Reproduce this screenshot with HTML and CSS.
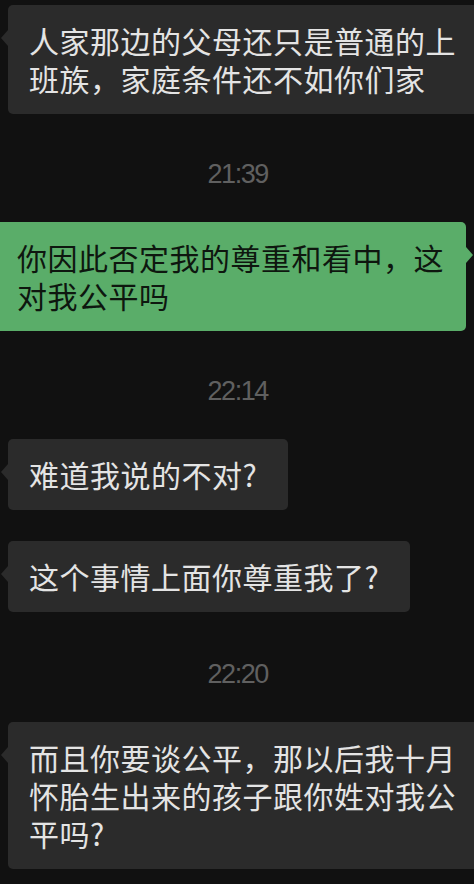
FILE: index.html
```html
<!DOCTYPE html>
<html lang="zh-CN">
<head>
  <meta charset="UTF-8">
  <meta name="viewport" content="width=device-width, initial-scale=1.0">
  <title>聊天记录</title>
  <link rel="stylesheet" href="styles.css">
</head>
<body>
  <div class="chat">
    <div class="row left">
      <div class="bubble">人家那边的父母还只是普通的上班族，家庭条件还不如你们家</div>
    </div>

    <div class="time">21:39</div>

    <div class="row right">
      <div class="bubble">你因此否定我的尊重和看中，这对我公平吗</div>
    </div>

    <div class="time">22:14</div>

    <div class="row left">
      <div class="bubble">难道我说的不对?</div>
    </div>
    <div class="row left">
      <div class="bubble">这个事情上面你尊重我了?</div>
    </div>

    <div class="time late">22:20</div>

    <div class="row left">
      <div class="bubble">而且你要谈公平，那以后我十月怀胎生出来的孩子跟你姓对我公平吗?</div>
    </div>
  </div>
</body>
</html>
```

FILE: styles.css
```css
html, body {
  margin: 0;
  padding: 0;
}
body {
  background-color: #111111;
  width: 474px;
  height: 884px;
  overflow: hidden;
  font-family: "Noto Sans CJK SC", "Noto Sans", sans-serif;
}
.chat {
  display: flex;
  flex-direction: column;
  padding: 5px 8px 0;
}
.row {
  display: flex;
}
.row.left {
  justify-content: flex-start;
}
.row.right {
  justify-content: flex-end;
}
.row + .row {
  margin-top: 31px;
}
.bubble {
  position: relative;
  flex-shrink: 0;
  max-width: 428px;
  padding: 16px 31px 17px 21px;
  border-radius: 5px;
  font-size: 30px;
  letter-spacing: 0.5px;
  line-height: 38px;
  background-color: #2b2b2b;
  color: #e4e4e4;
}
.bubble::before {
  content: "";
  position: absolute;
  top: 25px;
  border-top: 8px solid transparent;
  border-bottom: 8px solid transparent;
}
.left .bubble::before {
  left: -7px;
  border-right: 7px solid #2b2b2b;
}
.right .bubble {
  padding: 16px 21px 17px 31px;
  background-color: #5aad69;
  color: #0e170f;
}
.right .bubble::before {
  right: -7px;
  border-left: 7px solid #5aad69;
}
.time {
  margin: 45px 0 33px;
  padding-left: 1.4px;
  text-align: center;
  font-family: "Liberation Sans", Arial, sans-serif;
  font-size: 27px;
  letter-spacing: -1.4px;
  line-height: 30px;
  color: #606060;
}
.time.late {
  margin-top: 47px;
}
```
